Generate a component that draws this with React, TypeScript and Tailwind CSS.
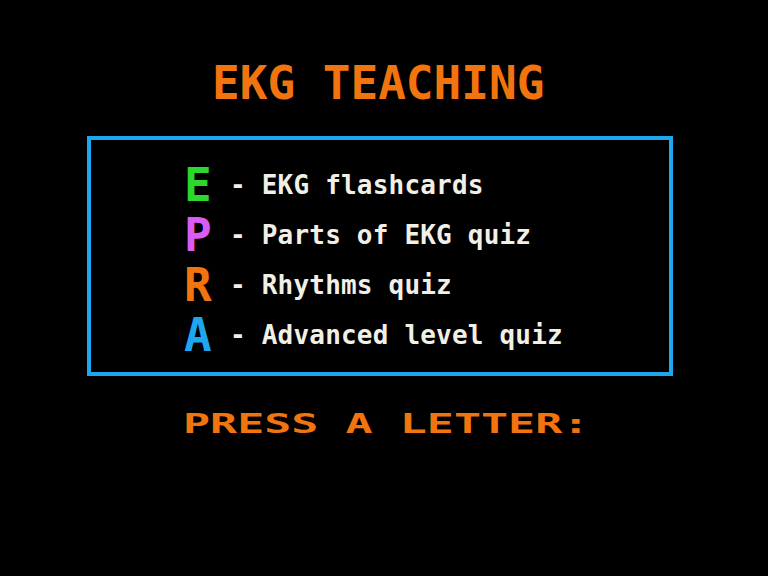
import React from 'react';

const mono = { fontFamily: "'DejaVu Sans Mono', 'Liberation Mono', monospace" };

const items = [
  { key: 'E', label: 'EKG flashcards', color: 'text-[#2bd82b]' },
  { key: 'P', label: 'Parts of EKG quiz', color: 'text-[#d95cf5]' },
  { key: 'R', label: 'Rhythms quiz', color: 'text-[#f2740f]' },
  { key: 'A', label: 'Advanced level quiz', color: 'text-[#1ea6ee]' },
];

export default function App() {
  return (
    <div className="h-[576px] w-[768px] overflow-hidden bg-black font-bold" style={mono}>
      <div className="pt-[57px] pl-[212px]">
        <h1 className="h-[52px] text-[46px] leading-[52px] font-bold text-[#f2740f]">EKG TEACHING</h1>
      </div>

      <div className="mt-[27px] ml-[87px] h-[240px] w-[586px] border-4 border-[#1ea6ee] pt-[20px] pl-[93px]">
        <div className="flex flex-col">
          {items.map((item) => (
            <div key={item.key} className="flex h-[50px] items-center">
              <span className={`w-[46px] text-[46px] leading-[50px] ${item.color}`}>{item.key}</span>
              <span className="text-[26px] tracking-[0.2px] leading-[50px] text-[#f2efe6]">- {item.label}</span>
            </div>
          ))}
        </div>
      </div>

      <div className="mt-[38px] pl-[183px]">
        <p className="origin-top scale-y-[0.6] text-[45px] leading-[34px] text-[#f2740f]">PRESS A LETTER:</p>
      </div>
    </div>
  );
}
